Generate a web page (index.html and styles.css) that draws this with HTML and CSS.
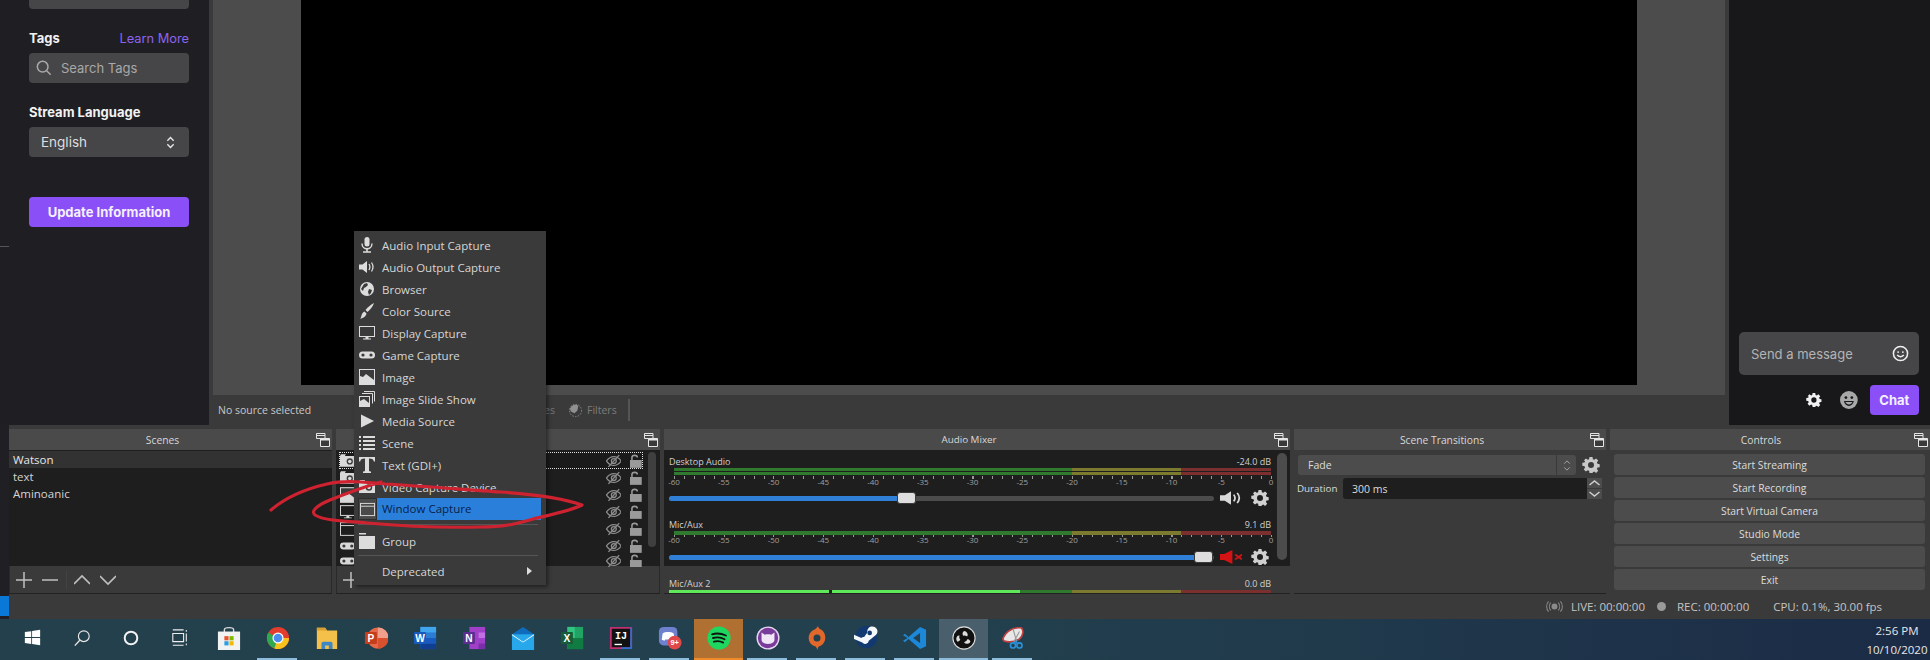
FILE: index.html
```html
<!DOCTYPE html>
<html lang="en">
<head>
<meta charset="utf-8">
<title>OBS Studio</title>
<link rel="stylesheet" href="styles.css">
</head>
<body>
<svg class="defs" width="0" height="0" aria-hidden="true">
  <defs>
    <symbol id="i-dock" viewBox="0 0 14 14"><path d="M.5.5h8.5v2H.5zM.5 2.5h8.5v3H.5z" fill="none" stroke="currentColor"/><path d="M4.500 5.500h9v8h-9z" fill="#3a3a3a" stroke="currentColor"/><path d="M4.500 5.500h9v2h-9z" fill="currentColor"/></symbol>
    <symbol id="i-mic" viewBox="0 0 16 16"><rect x="5.500" y="0" width="5" height="9.500" rx="2.500" fill="currentColor"/><path d="M3 6.500c0 7 10 7 10 0" fill="none" stroke="currentColor" stroke-width="1.400"/><path d="M8 12v2.500M4 15h8" stroke="currentColor" stroke-width="1.600"/></symbol>
    <symbol id="i-spk" viewBox="0 0 16 16" preserveAspectRatio="none"><path d="M0 5.500h3.500L8 2v12l-4.500-3.500H0z" fill="currentColor"/><path d="M10 5c1.200 2 1.200 4 0 6M12.500 3.500c2 3 2 6 0 9" fill="none" stroke="currentColor" stroke-width="1.300"/></symbol>
    <symbol id="i-globe" viewBox="0 0 16 16"><circle cx="8" cy="8" r="7" fill="currentColor"/><path d="M5 3l3-1 1 2-2 2-2 1-1 3-2-2zM10 8l3 1-1 3-2 2-1-3z" fill="#3a3a3a"/></symbol>
    <symbol id="i-brush" viewBox="0 0 16 16"><path d="M15 0c-1 3-3 6-6.500 9L6.500 7C9 4 12 1.500 15 0z" fill="currentColor"/><path d="M5.500 8.500l2 2c-.5 2.500-3 5-6.500 5 1.500-1 1-2.500 2-4.500.5-1.200 1.500-2 2.500-2.500z" fill="currentColor"/></symbol>
    <symbol id="i-mon" viewBox="0 0 16 16"><rect x=".5" y="1.500" width="15" height="10" fill="none" stroke="currentColor"/><path d="M6.500 12h3v1.500h2.500v1H4v-1h2.500z" fill="currentColor"/></symbol>
    <symbol id="i-pad" viewBox="0 0 16 16"><rect x="0" y="4.500" width="16" height="7" rx="3.500" fill="currentColor"/><circle cx="4" cy="8" r="1.600" fill="#3a3a3a"/><circle cx="12" cy="8" r="1.600" fill="#3a3a3a"/></symbol>
    <symbol id="i-img" viewBox="0 0 16 16"><rect width="16" height="16" y="0" fill="currentColor"/><path d="M1 1h14v10L7 5l-3 3-3-1z" fill="#3a3a3a"/></symbol>
    <symbol id="i-slides" viewBox="0 0 16 16"><path d="M5 .5h10.500v10M3 2.500h10.500v10" fill="none" stroke="currentColor"/><rect x="0" y="5" width="11" height="11" fill="currentColor"/><path d="M1 6h9v6L5 8l-4 2z" fill="#3a3a3a"/></symbol>
    <symbol id="i-play" viewBox="0 0 16 16"><path d="M2 1.500l13 6.500-13 6.500z" fill="currentColor"/></symbol>
    <symbol id="i-list" viewBox="0 0 16 16"><path d="M0 1h2v2H0zM0 5h2v2H0zM0 9h2v2H0zM0 13h2v2H0zM4 1h12v2H4zM4 5h12v2H4zM4 9h12v2H4zM4 13h12v2H4z" fill="currentColor"/></symbol>
    <symbol id="i-t" viewBox="0 0 16 16"><path d="M0 0h16v4.500h-1.200C14.500 2.500 13.500 1.500 10 1.500v12c0 .8.800 1 2 1V16H4v-1.500c1.200 0 2-.2 2-1v-12C2.500 1.500 1.500 2.500 1.200 4.500H0z" fill="currentColor"/></symbol>
    <symbol id="i-cam" viewBox="0 0 16 16"><path d="M0 3h5l1-2H1zM0 3h16v11H0z" fill="currentColor"/><circle cx="10" cy="8.500" r="3.200" fill="#3a3a3a"/><circle cx="10" cy="8.500" r="1.800" fill="currentColor"/></symbol>
    <symbol id="i-win" viewBox="0 0 16 16"><rect x=".5" y="1.500" width="15" height="13" fill="none" stroke="currentColor"/><path d="M.5 4.500h15" stroke="currentColor"/></symbol>
    <symbol id="i-folder" viewBox="0 0 16 16"><path d="M0 0h7v1.500H0zM0 3h16v13H0z" fill="currentColor"/></symbol>
    <symbol id="i-eye" viewBox="0 0 16 14"><path d="M.5 7C3 3.500 5.500 2.500 8 2.500S13 3.500 15.500 7C13 10.500 10.500 11.500 8 11.500S3 10.500 .5 7z" fill="none" stroke="currentColor" stroke-width="1.300"/><circle cx="8" cy="7" r="2.500" fill="none" stroke="currentColor" stroke-width="1.300"/><path d="M2.500 13L13.500 1" stroke="currentColor" stroke-width="1.400"/></symbol>
    <symbol id="i-lock" viewBox="0 0 14 14"><path d="M3 6V3.500C3 .5 8.500 .5 8.500 3.500" fill="none" stroke="currentColor" stroke-width="1.600"/><rect x="1" y="6" width="12" height="8" fill="currentColor"/></symbol>
    <symbol id="i-gear" viewBox="-1 0 18 16"><path fill-rule="evenodd" d="M6.500 0h3l.4 2.200 1.300.6L13.100 1.500l2.100 2.100-1.300 1.900.6 1.300 2.200.4v3l-2.200.4-.6 1.300 1.300 1.900-2.100 2.100-1.900-1.300-1.300.6L9.500 16h-3l-.4-2.200-1.300-.6-1.900 1.300L.8 12.400l1.300-1.900-.6-1.300L-.7 8.800v-3l2.200-.4.6-1.300L.8 3.600 2.900 1.500l1.900 1.300 1.300-.6zM8 5a3 3 0 100 6 3 3 0 000-6z" fill="currentColor"/></symbol>
  </defs>
</svg>

<div class="app">
  <section class="top">
    <aside class="twitch">
      <div class="stub"></div>
      <div class="label-row"><span class="label">Tags</span><span class="learn">Learn More</span></div>
      <div class="field field-search">
        <svg class="search" viewBox="0 0 18 18"><circle cx="7.500" cy="7.500" r="6" fill="none" stroke="currentColor" stroke-width="1.700"/><path d="M12 12l4.500 4.500" stroke="currentColor" stroke-width="1.700"/></svg>
        <span>Search Tags</span>
      </div>
      <div class="label-row"><span class="label">Stream Language</span></div>
      <div class="field field-select">
        <span>English</span>
        <svg class="updown" viewBox="0 0 10 14"><path d="M1.500 5L5 1.500 8.500 5M1.500 9L5 12.500 8.500 9" fill="none" stroke="currentColor" stroke-width="1.500"/></svg>
      </div>
      <button class="update">Update Information</button>
      <div class="tick-mark"></div>
    </aside>

    <main class="center">
      <div class="preview"><div class="stage"></div></div>
      <div class="context">
        <span class="ctx-label">No source selected</span>
        <span class="ctx-props">Properties</span>
        <svg class="ctx-filter" viewBox="0 0 16 16"><circle cx="8" cy="8" r="6.500" fill="none" stroke="currentColor" stroke-dasharray="1.500 1.500"/><path d="M2 6c2-5 7-5 9-3l-1 5-3 3-4-2z" fill="currentColor"/></svg>
        <span class="ctx-filters">Filters</span>
        <span class="ctx-sep"></span>
      </div>
    </main>

    <aside class="chat">
      <div class="chat-input">
        <span>Send a message</span>
        <svg class="smile" viewBox="0 0 18 18"><circle cx="9" cy="9" r="7.500" fill="none" stroke="currentColor" stroke-width="1.600"/><path d="M5.500 10.500c1.500 2.500 5.500 2.500 7 0" fill="none" stroke="currentColor" stroke-width="1.500"/><circle cx="6.500" cy="7.500" r="1" fill="currentColor"/><circle cx="11.500" cy="7.500" r="1" fill="currentColor"/></svg>
      </div>
      <div class="chat-actions">
        <svg class="chat-gear"><use href="#i-gear"/></svg>
        <svg class="chat-emote" viewBox="0 0 18 18"><circle cx="9" cy="9" r="9" fill="currentColor"/><circle cx="6" cy="6.500" r="1.400" fill="#18181b"/><circle cx="12" cy="6.500" r="1.400" fill="#18181b"/><path d="M4 10h10c-.5 3-2.500 5-5 5s-4.500-2-5-5z" fill="#18181b"/><path d="M5.500 11h7c-.5 1.500-2 2.500-3.500 2.500s-3-1-3.500-2.500z" fill="currentColor"/></svg>
        <button class="chat-btn">Chat</button>
      </div>
    </aside>
  </section>

  <section class="lower">
    <div class="strip"><div class="strip-blue"></div></div>
    <div class="lower-main">
      <div class="docks">
        <div class="dock dock-scenes">
          <header class="dock-head"><span>Scenes</span><svg class="dock-ic"><use href="#i-dock"/></svg></header>
          <div class="dock-body">
            <div class="scene scene-on">Watson</div>
            <div class="scene">text</div>
            <div class="scene">Aminoanic</div>
          </div>
          <div class="toolbar">
            <svg class="tool" viewBox="0 0 16 16"><path d="M8 0v16M0 8h16" stroke="currentColor" stroke-width="1.500"/></svg>
            <svg class="tool" viewBox="0 0 16 16"><path d="M0 8h16" stroke="currentColor" stroke-width="1.500"/></svg>
            <span class="tool-sep"></span>
            <svg class="tool" viewBox="0 0 16 16"><path d="M0 12l8-8 8 8" fill="none" stroke="currentColor" stroke-width="1.600"/></svg>
            <svg class="tool" viewBox="0 0 16 16"><path d="M0 4l8 8 8-8" fill="none" stroke="currentColor" stroke-width="1.600"/></svg>
          </div>
        </div>

        <div class="dock dock-sources">
          <header class="dock-head"><span>Sources</span><svg class="dock-ic"><use href="#i-dock"/></svg></header>
          <div class="dock-body src-body">
            <div class="src src-on"><svg class="src-ic"><use href="#i-cam"/></svg><svg class="src-eye"><use href="#i-eye"/></svg><svg class="src-lock"><use href="#i-lock"/></svg></div>
            <div class="src"><svg class="src-ic"><use href="#i-cam"/></svg><svg class="src-eye"><use href="#i-eye"/></svg><svg class="src-lock"><use href="#i-lock"/></svg></div>
            <div class="src"><svg class="src-ic"><use href="#i-img"/></svg><svg class="src-eye"><use href="#i-eye"/></svg><svg class="src-lock"><use href="#i-lock"/></svg></div>
            <div class="src"><svg class="src-ic"><use href="#i-mon"/></svg><svg class="src-eye"><use href="#i-eye"/></svg><svg class="src-lock"><use href="#i-lock"/></svg></div>
            <div class="src"><svg class="src-ic"><use href="#i-win"/></svg><svg class="src-eye"><use href="#i-eye"/></svg><svg class="src-lock"><use href="#i-lock"/></svg></div>
            <div class="src"><svg class="src-ic"><use href="#i-pad"/></svg><svg class="src-eye"><use href="#i-eye"/></svg><svg class="src-lock"><use href="#i-lock"/></svg></div>
            <div class="src src-last"><svg class="src-ic"><use href="#i-pad"/></svg><svg class="src-eye"><use href="#i-eye"/></svg><svg class="src-lock"><use href="#i-lock"/></svg></div>
            <div class="src-scroll"></div>
          </div>
          <div class="toolbar">
            <svg class="tool" viewBox="0 0 16 16"><path d="M8 0v16M0 8h16" stroke="currentColor" stroke-width="1.500"/></svg>
          </div>
        </div>

        <div class="dock dock-mixer">
          <header class="dock-head"><span>Audio Mixer</span><svg class="dock-ic"><use href="#i-dock"/></svg></header>
          <div class="dock-body mixer">
            <div class="mix-head mix-first"><span>Desktop Audio</span><span>-24.0 dB</span></div>
            <div class="meter meter-double"></div>
            <div class="ticks"></div>
            <div class="scale"><span>-60</span><span>-55</span><span>-50</span><span>-45</span><span>-40</span><span>-35</span><span>-30</span><span>-25</span><span>-20</span><span>-15</span><span>-10</span><span>-5</span><span>0</span></div>
            <div class="mix-ctl">
              <div class="track"><div class="fill" style="width:232px"></div><div class="thumb" style="left:228px"></div></div>
              <svg class="mix-spk"><use href="#i-spk"/></svg>
              <svg class="mix-gear"><use href="#i-gear"/></svg>
            </div>
            <div class="mix-head mix-second"><span>Mic/Aux</span><span>9.1 dB</span></div>
            <div class="meter meter-single"></div>
            <div class="ticks ticks-close"></div>
            <div class="scale"><span>-60</span><span>-55</span><span>-50</span><span>-45</span><span>-40</span><span>-35</span><span>-30</span><span>-25</span><span>-20</span><span>-15</span><span>-10</span><span>-5</span><span>0</span></div>
            <div class="mix-ctl mix-ctl-b">
              <div class="track"><div class="fill" style="width:530px"></div><div class="thumb" style="left:525px"></div></div>
              <svg class="mix-spk mix-muted" viewBox="0 0 16 16" preserveAspectRatio="none"><path d="M0 5h3l6-4v14l-6-4H0z" fill="currentColor"/><path d="M11 5.500l5 5M16 5.500l-5 5" stroke="currentColor" stroke-width="1.600"/></svg>
              <svg class="mix-gear"><use href="#i-gear"/></svg>
            </div>
            <div class="mix-head mix-third"><span>Mic/Aux 2</span><span>0.0 dB</span></div>
            <div class="meter meter-live"></div>
            <div class="mix-scroll"></div>
          </div>
        </div>

        <div class="dock dock-trans">
          <header class="dock-head"><span>Scene Transitions</span><svg class="dock-ic"><use href="#i-dock"/></svg></header>
          <div class="panel">
            <div class="trans-row">
              <div class="combo"><span class="combo-text">Fade</span><span class="combo-arrows"><svg viewBox="0 0 8 14"><path d="M1 5l3-3 3 3M1 9l3 3 3-3" fill="none" stroke="currentColor"/></svg></span></div>
              <svg class="trans-gear"><use href="#i-gear"/></svg>
            </div>
            <div class="dur-row">
              <span class="dur-label">Duration</span>
              <div class="spin"><span>300 ms</span></div>
              <div class="spin-btns">
                <svg viewBox="0 0 14 10"><path d="M2 7l5-4 5 4" fill="none" stroke="currentColor" stroke-width="1.500"/></svg>
                <svg viewBox="0 0 14 10"><path d="M2 3l5 4 5-4" fill="none" stroke="currentColor" stroke-width="1.500"/></svg>
              </div>
            </div>
          </div>
        </div>

        <div class="dock dock-controls">
          <header class="dock-head"><span>Controls</span><svg class="dock-ic"><use href="#i-dock"/></svg></header>
          <div class="panel controls">
            <button class="ctl">Start Streaming</button>
            <button class="ctl">Start Recording</button>
            <button class="ctl">Start Virtual Camera</button>
            <button class="ctl">Studio Mode</button>
            <button class="ctl">Settings</button>
            <button class="ctl">Exit</button>
          </div>
        </div>
      </div>

      <footer class="status">
        <svg class="st-live" viewBox="0 0 20 14"><circle cx="10" cy="7" r="3.500" fill="currentColor"/><path d="M5.500 2.500c-2 2.500-2 6.500 0 9M14.500 2.500c2 2.500 2 6.500 0 9M3 1C0 4 0 10 3 13M17 1c3 3 3 9 0 12" fill="none" stroke="currentColor" stroke-width="1.200"/></svg>
        <span class="st-text st-l">LIVE: 00:00:00</span>
        <span class="st-dot"></span>
        <span class="st-text st-r">REC: 00:00:00</span>
        <span class="st-text st-c">CPU: 0.1%, 30.00 fps</span>
      </footer>
    </div>
  </section>

  <nav class="taskbar">
    <div class="tb"><svg class="tb-ic tb-win" viewBox="0 0 20 20"><path d="M1 3.500l7.500-1v7H1zM9.500 2.300L19 1v8.500H9.500zM1 10.500h7.500v7l-7.500-1zM9.500 10.500H19V19l-9.500-1.300z" fill="#fff"/></svg></div>
    <div class="tb"><svg class="tb-ic tb-sys" viewBox="0 0 20 20"><circle cx="12" cy="8" r="6" fill="none" stroke="#e8e8e8" stroke-width="1.300"/><path d="M7.500 12.500L2 18.500" stroke="#e8e8e8" stroke-width="1.500"/></svg></div>
    <div class="tb"><svg class="tb-ic tb-sys" viewBox="0 0 20 20"><circle cx="10" cy="10" r="7" fill="none" stroke="#f2f2f2" stroke-width="2.200"/></svg></div>
    <div class="tb"><svg class="tb-ic tb-sys" viewBox="0 0 20 20"><path d="M2 1h12M2 5h12v9H2zM2 18h12M17 1v2M17 5v9M17 16v2" fill="none" stroke="#eee" stroke-width="1.200"/></svg></div>
    <div class="tb"><svg class="tb-ic" viewBox="0 0 26 26"><path d="M8 7V4c0-3 10-3 10 0v3" fill="none" stroke="#ddd" stroke-width="1.500"/><rect x="1" y="6" width="24" height="20" fill="#f2f2f2"/><rect x="8" y="11" width="4.500" height="4.500" fill="#e8532b"/><rect x="13.500" y="11" width="4.500" height="4.500" fill="#7fba00"/><rect x="8" y="16.500" width="4.500" height="4.500" fill="#2a9fe0"/><rect x="13.500" y="16.500" width="4.500" height="4.500" fill="#f5b800"/></svg></div>
    <div class="tb tb-run"><svg class="tb-ic" viewBox="0 0 26 26"><circle cx="13" cy="13" r="12" fill="#e33b2e"/><path d="M13 13L2.500 7A12 12 0 0 0 9 24.300z" fill="#2fa84f"/><path d="M13 13l-4 11.300A12 12 0 0 0 25 13z" fill="#f7c21b"/><circle cx="13" cy="13" r="6" fill="#fff"/><circle cx="13" cy="13" r="4.700" fill="#4a8cf0"/></svg></div>
    <div class="tb"><svg class="tb-ic" viewBox="0 0 26 26"><path d="M2 2h9l2 3h11v20H2z" fill="#f4c04a"/><path d="M2 2h9l2 3H2z" fill="#d8a030"/><path d="M7 25v-6a2 2 0 012-2h8a2 2 0 012 2v6h-4v-4h-4v4z" fill="#3d87c5"/></svg></div>
    <div class="tb"><svg class="tb-ic" viewBox="0 0 26 26"><circle cx="15" cy="13" r="11.500" fill="#e8694a"/><path d="M15 13V1.500A11.500 11.500 0 0 1 26.500 13z" fill="#f0a08a"/><path d="M15 13h11.500A11.500 11.500 0 0 1 15 24.500z" fill="#d8502e"/><rect x="1" y="6.500" width="13" height="13" rx="1" fill="#c43e1c"/><text class="tb-letter" x="7.500" y="17">P</text></svg></div>
    <div class="tb"><svg class="tb-ic" viewBox="0 0 26 26"><rect x="8" y="1" width="17" height="24" fill="#2b7cd3"/><rect x="8" y="1" width="17" height="6" fill="#41a5ee"/><rect x="8" y="13" width="17" height="6" fill="#185abd"/><rect x="8" y="19" width="17" height="6" fill="#103f91"/><rect x="1" y="6.500" width="13" height="13" rx="1" fill="#185abd"/><text class="tb-letter" x="7.500" y="17">W</text></svg></div>
    <div class="tb"><svg class="tb-ic" viewBox="0 0 26 26"><rect x="8" y="1" width="17" height="24" fill="#a040c8"/><rect x="18" y="7" width="7" height="6" fill="#c070e0"/><rect x="18" y="19" width="7" height="6" fill="#7a2ea8"/><rect x="1" y="6.500" width="13" height="13" rx="1" fill="#5c2d91"/><text class="tb-letter" x="7.500" y="17">N</text></svg></div>
    <div class="tb"><svg class="tb-ic" viewBox="0 0 26 26"><path d="M1 9L13 1l12 8v2L13 18 1 11z" fill="#0f6cbd"/><path d="M1 9h24v17H1z" fill="#28a8ea"/><path d="M1 9l12 8 12-8v1L13 18 1 10z" fill="#fff"/></svg></div>
    <div class="tb"><svg class="tb-ic" viewBox="0 0 26 26"><rect x="8" y="1" width="17" height="24" fill="#21a366"/><rect x="8" y="1" width="8" height="12" fill="#33c481"/><rect x="8" y="13" width="17" height="12" fill="#107c41"/><rect x="1" y="6.500" width="13" height="13" rx="1" fill="#185c37"/><text class="tb-letter" x="7.500" y="17">X</text></svg></div>
    <div class="tb tb-run"><svg class="tb-ic" viewBox="0 0 26 26"><rect x="2" y="2" width="22" height="22" fill="#111"/><path d="M2 2h22v22H2z" fill="none" stroke="#c03070" stroke-width="2"/><path d="M24 2v22H13" fill="none" stroke="#2a70d0" stroke-width="2"/><text class="tb-mono" x="13" y="14">IJ</text><path d="M6 20h8" stroke="#fff" stroke-width="1.500"/></svg></div>
    <div class="tb tb-run"><svg class="tb-ic" viewBox="0 0 26 26"><rect x="1" y="1" width="20" height="20" rx="5" fill="#6f80cf"/><path d="M5 8c3-2 9-2 12 0l1 7-3 1-1-1.500h-6L7 16l-3-1z" fill="#fff"/><circle cx="18" cy="18" r="7.500" fill="#e0484a"/><text class="tb-badge" x="18" y="21">9+</text></svg></div>
    <div class="tb tb-spotify"><svg class="tb-ic" viewBox="0 0 26 26"><circle cx="13" cy="13" r="12.500" fill="#1ed760"/><path d="M5.500 9c5-1.500 10-1 15 1.300M6.500 13c4.500-1.200 9-.7 12.500 1.300M7.500 17c3.500-1 7-.6 10 1" fill="none" stroke="#111" stroke-width="2" stroke-linecap="round"/></svg></div>
    <div class="tb tb-run"><svg class="tb-ic" viewBox="0 0 26 26"><circle cx="13" cy="13" r="12.500" fill="#e8d8f0"/><circle cx="13" cy="13" r="11" fill="#7a3c9a"/><path d="M6 7l3.500 2.500c2-.7 5-.7 7 0L20 7v8c0 3-3 4.500-7 4.500S6 18 6 15z" fill="#f0e6f5"/></svg></div>
    <div class="tb tb-run"><svg class="tb-ic" viewBox="0 0 26 26"><path d="M14 0c.5 1.500 1.200 2.500 2 3.300 3.800 1.500 6 5 6 9.500 0 4.500-3 8.500-7 9.500-.8.800-1.200 2-1.500 3.700-.5-1.500-1-2.800-2-3.800C7 21 4 17.500 4 13c0-4.500 3-8 7-9.500C12 2.500 13.500 1.500 14 0z" fill="#e2672b"/><circle cx="13" cy="13" r="3.800" fill="#22404e"/></svg></div>
    <div class="tb tb-run"><svg class="tb-ic" viewBox="0 0 26 26"><circle cx="13.500" cy="12" r="12" fill="#123a70"/><path d="M0 14l9 4a4 4 0 007-2l6-5a5.500 5.500 0 10-7.500-4L11 12c-1.500 0-2.500.3-3 1L0 9.500z" fill="#f4f8fb"/><circle cx="17" cy="7.500" r="2.500" fill="#123a70"/></svg></div>
    <div class="tb tb-run"><svg class="tb-ic" viewBox="0 0 26 26"><path d="M18.500 1L25 4v18l-6.500 3L6 14l-4 3.500L0 16l5-3-5-3 2-1.500L6 12z" fill="#1e88d8"/><path d="M18.500 7.500L11 13l7.500 5.500z" fill="#22404e"/></svg></div>
    <div class="tb tb-obs"><svg class="tb-ic" viewBox="0 0 26 26"><circle cx="13" cy="13" r="12" fill="#111" stroke="#ddd" stroke-width="1.200"/><path d="M13 5.500a4 4 0 013.500 6 6 6 0 00-4.500-1 4 4 0 011-5zM6 17a4 4 0 012-7 6 6 0 001 5 4 4 0 01-3 2zM20 17a4 4 0 01-7 .5 6 6 0 004-3.500 4 4 0 013 3z" fill="#ddd"/></svg></div>
    <div class="tb tb-run"><svg class="tb-ic" viewBox="0 0 26 26"><path d="M2 14C5 6 13 1 22 2c3 3 2 8-2 12-5 3-12 4-17 2z" fill="#e8e8e8" stroke="#c04040" stroke-width="1.800"/><path d="M13 3l4 14M20 6L14 17" stroke="#999" stroke-width="1.200"/><circle cx="13" cy="21" r="2.800" fill="none" stroke="#2a90d8" stroke-width="1.800"/><circle cx="20" cy="21" r="2.800" fill="none" stroke="#2a90d8" stroke-width="1.800"/><path d="M14.500 19l1.500-3 1.500 3" fill="none" stroke="#2a90d8" stroke-width="1.500"/></svg></div>
    <div class="clock"><span>2:56 PM</span><span>10/10/2020</span></div>
  </nav>

  <div class="menu">
    <div class="mi"><svg class="mi-ic"><use href="#i-mic"/></svg><span>Audio Input Capture</span></div>
    <div class="mi"><svg class="mi-ic"><use href="#i-spk"/></svg><span>Audio Output Capture</span></div>
    <div class="mi"><svg class="mi-ic"><use href="#i-globe"/></svg><span>Browser</span></div>
    <div class="mi"><svg class="mi-ic"><use href="#i-brush"/></svg><span>Color Source</span></div>
    <div class="mi"><svg class="mi-ic"><use href="#i-mon"/></svg><span>Display Capture</span></div>
    <div class="mi"><svg class="mi-ic"><use href="#i-pad"/></svg><span>Game Capture</span></div>
    <div class="mi"><svg class="mi-ic"><use href="#i-img"/></svg><span>Image</span></div>
    <div class="mi"><svg class="mi-ic"><use href="#i-slides"/></svg><span>Image Slide Show</span></div>
    <div class="mi"><svg class="mi-ic"><use href="#i-play"/></svg><span>Media Source</span></div>
    <div class="mi"><svg class="mi-ic"><use href="#i-list"/></svg><span>Scene</span></div>
    <div class="mi"><svg class="mi-ic"><use href="#i-t"/></svg><span>Text (GDI+)</span></div>
    <div class="mi"><svg class="mi-ic"><use href="#i-cam"/></svg><span>Video Capture Device</span></div>
    <div class="mi mi-active"><span class="mi-box"><svg class="mi-ic"><use href="#i-win"/></svg></span><span class="mi-hl">Window Capture</span></div>
    <div class="mi-sep mi-sep-a"></div>
    <div class="mi"><svg class="mi-ic"><use href="#i-folder"/></svg><span>Group</span></div>
    <div class="mi-sep mi-sep-b"></div>
    <div class="mi mi-sub"><span class="mi-blank"></span><span>Deprecated</span><span class="mi-arrow"></span></div>
  </div>

  <svg class="scribble" viewBox="0 0 1930 660" aria-hidden="true">
    <path d="M271 510C285 498 305 489 327 484C345 480 365 482 385 484C420 486 470 490 500 492C530 494 560 497 582 505C570 511 550 515 533 519C515 524 505 527 480 527C440 528 400 526 367 523C345 521 325 521 315 515C310 511 318 505 330 500C345 494 360 488 381 482" fill="none" stroke="#cf2230" stroke-width="3.200" stroke-linecap="round" stroke-linejoin="round"/>
  </svg>
</div>
</body>
</html>
```

FILE: styles.css
```css
* { box-sizing: border-box; }
html, body { margin: 0; padding: 0; }
body {
  width: 1930px;
  height: 660px;
  overflow: hidden;
  background: #3a3a3a;
  font-family: "Open Sans", "Noto Sans", sans-serif;
  font-size: 11.5px;
  color: #dcdcdc;
}
button { font: inherit; border: 0; padding: 0; color: inherit; }
.defs { position: absolute; }
.app { position: relative; width: 1930px; height: 660px; display: flex; flex-direction: column; }

/* top area */
.top { display: flex; height: 425px; }
.twitch {
  position: relative;
  width: 209px;
  padding-left: 29px;
  background: #1f1f23;
  font-family: Inter, "Liberation Sans", sans-serif;
  font-size: 14px;
  display: flex;
  flex-direction: column;
  align-items: flex-start;
}
.stub { width: 160px; height: 9px; background: #464649; border-radius: 0 0 4px 4px; }
.label-row { width: 160px; height: 20px; margin-top: 19px; display: flex; justify-content: space-between; align-items: center; }
.label { color: #f2f2f2; font-weight: 700; font-size: 13px; }
.learn { color: #8d63ee; font-size: 12.8px; }
.field { width: 160px; height: 30px; margin-top: 5px; background: #464649; border-radius: 4px; display: flex; align-items: center; }
.field-search { padding-left: 7px; color: #a8a8a8; font-size: 13px; }
.search { width: 16px; height: 16px; margin-right: 9px; color: #a8a8a8; }
.field-select { padding: 0 14px 0 12px; justify-content: space-between; color: #dedede; font-size: 13.5px; }
.updown { width: 9px; height: 13px; color: #e8e8e8; }
.update { width: 160px; height: 30px; margin-top: 40px; background: #8a4ff6; color: #f5f0ff; border-radius: 4px; font-weight: 700; font-size: 13px; }
.tick-mark { position: absolute; left: 0; top: 246px; width: 9px; height: 1px; background: #555; }

.center { width: 1520px; padding: 0 4px; }
.preview { height: 395px; background: #4c4c4c; padding: 0 88px 10px; }
.stage { width: 100%; height: 100%; background: #000; }
.context { height: 30px; padding-left: 5px; display: flex; align-items: center; font-size: 10.5px; }
.ctx-label { width: 285px; color: #c8c8c8; }
.ctx-props { width: 52px; text-align: right; color: #777; }
.ctx-filter { width: 15px; height: 15px; margin-left: 13px; color: #909090; }
.ctx-filters { margin-left: 4px; color: #7c7c7c; }
.ctx-sep { width: 2px; height: 22px; margin-left: 11px; border: 1px solid #555; background: #2e2e2e; }

.chat {
  width: 201px;
  padding: 0 11px 10px 10px;
  background: #18181b;
  display: flex;
  flex-direction: column;
  justify-content: flex-end;
  font-family: Inter, "Liberation Sans", sans-serif;
}
.chat-input { height: 43px; padding: 0 10px 0 12px; background: #464649; border-radius: 5px; display: flex; align-items: center; justify-content: space-between; color: #b4b4b4; font-size: 13px; }
.smile { width: 17px; height: 17px; color: #f0f0f0; }
.chat-actions { height: 30px; margin-top: 10px; display: flex; align-items: center; }
.chat-gear { width: 16px; height: 16px; margin-left: 67px; color: #f0f0f0; }
.chat-emote { width: 18px; height: 18px; margin-left: 18px; color: #a8a8a8; }
.chat-btn { width: 50px; height: 30px; margin-left: 12px; background: #8a4ff6; color: #f5f0ff; border-radius: 4px; font-weight: 700; font-size: 13px; }

/* lower area */
.lower { display: flex; height: 194px; }
.strip { width: 9px; flex: none; background: #202024; padding-top: 171px; }
.strip-blue { height: 20px; background: #0a78d7; }
.lower-main { width: 1921px; flex: none; }
.docks { display: flex; gap: 4px; height: 169px; padding-top: 4px; }
.dock { height: 165px; flex: none; display: flex; flex-direction: column; border-bottom: 1px solid #222; }
.dock-scenes { width: 323px; }
.dock-sources { width: 324px; }
.dock-mixer { width: 626px; }
.dock-trans { width: 312px; }
.dock-controls { width: 320px; border-bottom: 0; }
.dock-head { position: relative; height: 21px; flex: none; background: #4a4a4a; display: flex; align-items: center; justify-content: center; color: #d8d8d8; font-size: 10.3px; padding-right: 16px; }
.dock-mixer .dock-head { font-size: 9.8px; }
.dock-controls .dock-head { padding-right: 18px; }
.dock-ic { position: absolute; right: 2px; top: 4px; width: 14px; height: 14px; color: #e6e6e6; }
.dock-body { position: relative; height: 116px; flex: none; background: #1e1e1e; }

.scene { height: 17px; padding-left: 4px; line-height: 17px; color: #d4d4d4; font-size: 11.500px; }
.scene-on { margin-top: 1px; background: #323232; color: #e6e6e6; }

.toolbar { flex: 1; padding-left: 6px; background: #3a3a3a; display: flex; align-items: center; gap: 10px; color: #c0c0c0; border-left: 1px solid #2a2a2a; border-right: 1px solid #2a2a2a; }
.tool { width: 16px; height: 16px; }
.tool-sep { width: 1px; height: 18px; margin: 0 -3px 0 -2px; background: #444; }

.src-body { padding-top: 2px; }
.src { width: 304px; height: 17px; margin-left: 3px; position: relative; color: #d8d8d8; display: flex; align-items: center; }
.src-on { outline: 1px dotted #e0e0e0; outline-offset: -1px; background: #1a1a1a; }
.src-ic { width: 16px; height: 16px; margin-left: 1px; }
.src-eye { width: 16px; height: 14px; margin-left: 250px; color: #8d8d8d; }
.src-lock { width: 14px; height: 14px; margin-left: 8px; color: #9a9a9a; }
.src-last { height: 13px; overflow: hidden; }
.src-scroll { position: absolute; right: 4px; top: 2px; width: 8px; height: 95px; background: #3f3f3f; border-radius: 4px; }

.mixer { padding-left: 5px; font-size: 9px; color: #d0d0d0; }
.mix-head { width: 602px; height: 13px; display: flex; justify-content: space-between; align-items: center; }
.mix-first { margin-top: 5px; }
.mix-second { margin-top: 10px; }
.mix-third { margin-top: 10px; }
.meter { width: 597px; margin-left: 5px; }
.meter-double { height: 7px; background:
  linear-gradient(#1e1e1e, #1e1e1e) 0 3px / 100% 1px no-repeat,
  linear-gradient(90deg, #2f7a2f 0 398px, #7c7a2f 398px 507px, #7c2f2f 507px); }
.meter-single { height: 4px; background: linear-gradient(90deg, #2f7a2f 0 398px, #7c7a2f 398px 507px, #7c2f2f 507px); }
.meter-live { width: 602px; height: 3px; margin-left: 0; background: linear-gradient(90deg, #5fe85a 0 160px, #1e1e1e 160px 163px, #5fe85a 163px 351px, #2f7a2f 351px 403px, #7c7a2f 403px 512px, #7c2f2f 512px); }
.ticks { width: 598px; height: 3px; margin: 1px 0 0 5px; background: repeating-linear-gradient(90deg, #9a9a9a 0 1px, transparent 1px 9.950px); }
.ticks-close { height: 2px; margin-top: 0; }
.scale { width: 597px; height: 8px; margin: -1px 0 0 5px; display: flex; justify-content: space-between; font-size: 8px; line-height: 8px; color: #a0a0a0; }
.scale span { width: 0; display: flex; justify-content: center; }
.mix-ctl { height: 20px; margin-top: 2px; display: flex; align-items: center; }
.mix-ctl-b { margin-top: 3px; }
.track { position: relative; width: 545px; height: 5px; background: #4c4c4c; border-radius: 3px; }
.fill { height: 5px; background: #2f7fd6; border-radius: 3px; }
.thumb { position: absolute; top: -3.500px; width: 19px; height: 12px; background: #dedede; border: 1px solid #3a3a3a; border-radius: 3px; }
.mix-spk { width: 22px; height: 18px; margin-left: 6px; color: #d8d8d8; }
.mix-muted { color: #d41414; height: 16px; }
.mix-gear { width: 18px; height: 16px; margin-left: 9px; color: #d0d0d0; }
.mix-scroll { position: absolute; right: 3px; top: 3px; width: 10px; height: 107px; background: #4c4c4c; border-radius: 5px; }

.panel { flex: 1; font-size: 10.5px; }
.trans-row { height: 20px; margin: 5px 0 0 4px; display: flex; align-items: center; }
.combo { width: 278px; height: 20px; background: #4c4c4c; border-radius: 3px; display: flex; align-items: center; }
.combo-text { width: 258px; padding-left: 10px; }
.combo-arrows { width: 20px; height: 20px; border-left: 1px solid #3a3a3a; display: flex; align-items: center; justify-content: center; color: #aaa; }
.combo-arrows svg { width: 8px; height: 13px; }
.trans-gear { width: 18px; height: 16px; margin-left: 6px; color: #c8c8c8; }
.dur-row { height: 21px; margin: 3px 0 0 3px; display: flex; align-items: center; }
.dur-label { width: 46px; font-size: 9.8px; }
.spin { width: 244px; height: 21px; padding-left: 9px; background: #1e1e1e; display: flex; align-items: center; border-radius: 3px 0 0 3px; }
.spin-btns { width: 15px; height: 21px; display: flex; flex-direction: column; gap: 1px; color: #cfcfcf; }
.spin-btns svg { width: 15px; height: 10px; background: #4c4c4c; }

.controls { padding: 4px 5px 0 4px; display: flex; flex-direction: column; gap: 2px; }
.ctl { height: 21px; flex: none; background: #4c4c4c; border-radius: 3px; color: #dcdcdc; font-size: 10.3px; }

.status { height: 25px; display: flex; align-items: center; font-size: 11.500px; color: #c4c4c4; }
.st-live { width: 17px; height: 13px; margin-left: 1537px; color: #8a8a8a; }
.st-text { white-space: nowrap; }
.st-l { margin-left: 8px; }
.st-dot { width: 9px; height: 9px; margin-left: 12px; border-radius: 50%; background: #9a9a9a; }
.st-r { margin-left: 11px; }
.st-c { margin-left: 24px; }

/* taskbar */
.taskbar {
  height: 41px;
  padding-left: 8px;
  display: flex;
  background: linear-gradient(90deg, #23404c 0, #22404e 50%, #20394b 70%, #1b2b46 100%);
}
.tb { position: relative; width: 49px; height: 41px; padding-top: 7px; display: flex; justify-content: center; align-items: flex-start; flex: none; }
.tb-ic { width: 24px; height: 24px; }
.tb-win { width: 17px; height: 17px; margin-top: 3px; }
.tb-sys { width: 18px; height: 18px; margin-top: 3px; }
.tb-run::after { content: ""; position: absolute; left: 4px; right: 5px; bottom: 0; height: 2px; background: #8dbcdd; }
.tb-spotify { background: #b07031; }
.tb-spotify::after { content: ""; position: absolute; left: 0; right: 0; bottom: 0; height: 2px; background: #ef8a2a; }
.tb-obs { background: #4a5f6c; }
.tb-obs::after { content: ""; position: absolute; left: 0; right: 0; bottom: 0; height: 2px; background: #8dbcdd; }
.tb-letter { font-family: "Liberation Sans", sans-serif; font-size: 11px; font-weight: 700; fill: #fff; text-anchor: middle; }
.tb-mono { font-family: "Liberation Mono", monospace; font-size: 11px; font-weight: 700; fill: #fff; text-anchor: middle; }
.tb-badge { font-family: "Liberation Sans", sans-serif; font-size: 8px; font-weight: 700; fill: #fff; text-anchor: middle; }
.clock { margin-left: 829px; width: 62px; padding-top: 2px; display: flex; flex-direction: column; align-items: center; font-size: 11.5px; line-height: 19px; color: #e8e8e8; }

/* context menu */
.menu { position: absolute; left: 354px; top: 231px; width: 192px; height: 354px; padding-top: 3px; background: #3a3a3a; box-shadow: 2px 2px 4px rgba(0,0,0,.45); color: #d6d6d6; font-size: 11.500px; }
.mi { height: 22px; display: flex; align-items: center; padding-left: 5px; white-space: nowrap; }
.mi-ic { width: 16px; height: 16px; flex: none; margin-right: 7px; color: #dcdcdc; }
.mi-active { padding-left: 4px; }
.mi-box { width: 19px; height: 22px; background: #4a4a4a; border: 1px solid #2e2e2e; display: flex; align-items: center; justify-content: center; }
.mi-box .mi-ic { margin: 0; width: 15px; height: 15px; }
.mi-hl { width: 164px; height: 22px; line-height: 22px; padding-left: 5px; background: #2a7fdb; color: #06224a; }
.mi-sep { height: 1px; background: #555; }
.mi-sep-a { margin: 4px 8px 5px 4px; }
.mi-sep-b { margin: 3px 8px 4px 4px; }
.mi-blank { width: 23px; }
.mi-sub { position: relative; }
.mi-arrow { position: absolute; right: 14px; top: 7px; border-left: 5px solid #dcdcdc; border-top: 4px solid transparent; border-bottom: 4px solid transparent; }

.scribble { position: absolute; left: 0; top: 0; width: 1930px; height: 660px; pointer-events: none; }
```
